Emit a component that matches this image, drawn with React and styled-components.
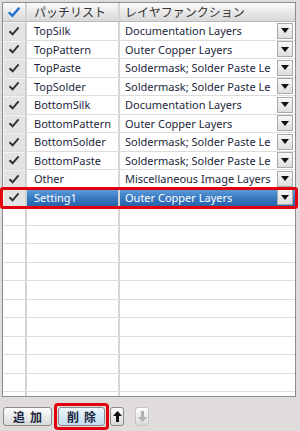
import React from 'react'
import styled, { createGlobalStyle } from 'styled-components'

const GlobalStyle = createGlobalStyle`
  html, body {
    margin: 0;
    padding: 0;
    background: #dfdcdb;
  }
  body {
    font-family: "Noto Sans", "Noto Sans CJK JP", sans-serif;
  }
`

const Panel = styled.div`
  width: 300px;
  height: 431px;
  box-sizing: border-box;
  padding: 2px 4px 0 2px;
  display: flex;
  flex-direction: column;
  background: #dfdcdb;
`

const Grid = styled.div`
  height: 395px;
  box-sizing: border-box;
  border: 1px solid #8d8d8d;
  box-shadow: inset 1px 1px 0 #c9c9c9;
  background: #fff;
  display: flex;
  flex-direction: column;
`

const EmptyArea = styled.div`
  flex: 1;
  overflow: hidden;
  min-height: 0;
`

const Row = styled.div`
  position: relative;
  z-index: ${p => (p.$marked ? 1 : 'auto')};
  display: grid;
  grid-template-columns: 24px 93px 1fr;
  height: ${p => (p.$header ? '19px' : '18.5px')};
  flex: none;
  box-sizing: border-box;
  border-bottom: 1px solid ${p => (p.$header ? '#b9b9b9' : '#dcdcdc')};
  background: ${p => (p.$header ? 'linear-gradient(#fbfbfb, #e6e6e6 55%, #d9d9d9)' : '#fff')};

  ${p => p.$marked && `
    &::after {
      content: '';
      position: absolute;
      left: -3px;
      right: -3px;
      top: -2px;
      bottom: -3px;
      border: 3px solid #e2000f;
      border-radius: 3px;
      pointer-events: none;
    }
  `}
`

const CheckCell = styled.div`
  display: flex;
  align-items: center;
  justify-content: center;
  box-sizing: border-box;
  border-right: 2px solid #d2d2d2;
  background: ${p => (p.$plain ? 'transparent' : '#e3e3e3')};
  box-shadow: ${p => (p.$plain ? 'none' : 'inset 1px 1px 0 #f4f4f4')};
`

const Cell = styled.div`
  display: flex;
  align-items: center;
  box-sizing: border-box;
  padding-left: ${p => p.$pad || 6}px;
  font-size: ${p => (p.$header ? '12px' : '11px')};
  color: ${p => (p.$selected ? '#fff' : p.$header ? '#333' : '#1b1f3a')};
  background: ${p => (p.$selected ? 'linear-gradient(#5f9edb, #3a7cc3 50%, #2763ab)' : 'transparent')};
  border-right: ${p => (p.$last ? 'none' : '2px solid #d6d6d6')};
  white-space: nowrap;
  overflow: hidden;
`

const CellText = styled.span`
  flex: 1;
  overflow: hidden;
  white-space: nowrap;
`

const DropButton = styled.div`
  flex: none;
  width: 16px;
  height: 16px;
  margin-right: 2px;
  box-sizing: border-box;
  border: 1px solid #a9a9a9;
  background: linear-gradient(#f7f7f7, #dedede);
  display: flex;
  align-items: center;
  justify-content: center;
`

const Footer = styled.div`
  flex: 1;
  display: flex;
  align-items: center;
  padding: 4px 0 0 1px;
`

const Button = styled.button`
  width: ${p => p.$w || 49}px;
  height: 19px;
  margin-left: ${p => p.$gap || 0}px;
  padding: 0;
  box-sizing: border-box;
  border: 1px solid ${p => (p.$disabled ? '#c4c4c4' : '#8a8a8a')};
  border-radius: 3px;
  background: ${p => (p.$active ? 'linear-gradient(#eef6fc, #d7e9f6 50%, #c3dcee)' : 'linear-gradient(#fdfdfd, #ececec 50%, #dadada)')};
  font-family: "Noto Sans CJK JP", sans-serif;
  font-size: 12px;
  font-weight: bold;
  letter-spacing: 5px;
  text-indent: 5px;
  color: ${p => (p.$disabled ? '#a8a8a8' : '#1d2440')};
  display: flex;
  align-items: center;
  justify-content: center;
`

const Focus = styled.div`
  margin-left: 2px;
  padding: 1px;
  border: 3px solid #e2000f;
  border-radius: 4px;
`

const Check = ({ color = '#333', size = 12 }) => (
  <svg width={size} height={size} viewBox="0 0 12 12">
    <path d="M1.5 6.2 L4.6 9.3 L10.6 2.3" fill="none" stroke={color} strokeWidth="2" />
  </svg>
)

const Triangle = () => (
  <svg width="8" height="5" viewBox="0 0 8 5">
    <path d="M0 0 H8 L4 5 Z" fill="#111" />
  </svg>
)

const Arrow = ({ up, color }) => (
  <svg width="9" height="11" viewBox="0 0 9 11">
    {up
      ? <path d="M4.5 0 L9 5 H6 V11 H3 V5 H0 Z" fill={color} />
      : <path d="M4.5 11 L9 6 H6 V0 H3 V6 H0 Z" fill={color} />}
  </svg>
)

const patches = [
  ['TopSilk', 'Documentation Layers'],
  ['TopPattern', 'Outer Copper Layers'],
  ['TopPaste', 'Soldermask; Solder Paste Le'],
  ['TopSolder', 'Soldermask; Solder Paste Le'],
  ['BottomSilk', 'Documentation Layers'],
  ['BottomPattern', 'Outer Copper Layers'],
  ['BottomSolder', 'Soldermask; Solder Paste Le'],
  ['BottomPaste', 'Soldermask; Solder Paste Le'],
  ['Other', 'Miscellaneous Image Layers'],
  ['Setting1', 'Outer Copper Layers'],
]

export default function App() {
  const selected = 9

  return (
    <Panel>
      <GlobalStyle />
      <Grid>
        <Row $header>
          <CheckCell $plain><Check color="#1f6fd0" size={14} /></CheckCell>
          <Cell $header $pad={7}>パッチリスト</Cell>
          <Cell $header $last $pad={5}>レイヤファンクション</Cell>
        </Row>
        {patches.map(([name, fn], i) => (
          <Row key={name} $marked={i === selected}>
            <CheckCell><Check /></CheckCell>
            <Cell $pad={7} $selected={i === selected}>{name}</Cell>
            <Cell $last $pad={5} $selected={i === selected}>
              <CellText>{fn}</CellText>
              <DropButton><Triangle /></DropButton>
            </Cell>
          </Row>
        ))}
        <EmptyArea>
          {Array.from({ length: 11 }).map((_, i) => (
            <Row key={'e' + i}>
              <CheckCell $plain />
              <Cell />
              <Cell $last />
            </Row>
          ))}
        </EmptyArea>
      </Grid>
      <Footer>
        <Button>追加</Button>
        <Focus>
          <Button $active $w={47}>削除</Button>
        </Focus>
        <Button $w={14} $gap={1}><Arrow up color="#111" /></Button>
        <Button $w={14} $gap={11} $disabled><Arrow color="#b0b0b0" /></Button>
      </Footer>
    </Panel>
  )
}
